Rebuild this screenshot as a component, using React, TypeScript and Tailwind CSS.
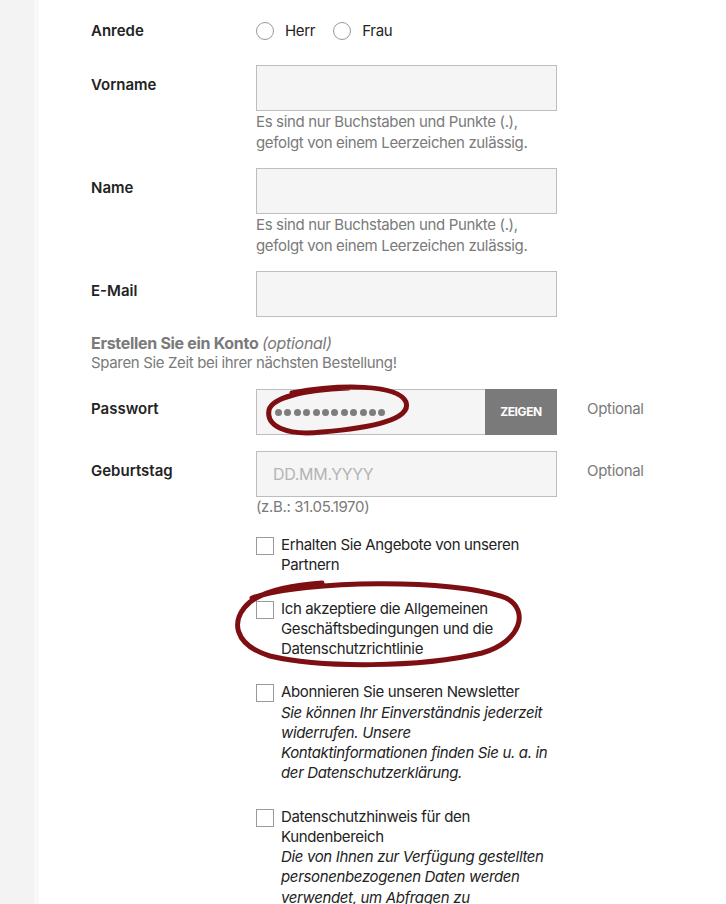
import React from "react";

const font = { fontFamily: "Inter, 'Liberation Sans', sans-serif" };

function Label({ text }: { text: string }) {
  return <div className="w-[165px] shrink-0 pt-[10px] text-[15px] leading-[20px] font-semibold text-[#232323]">{text}</div>;
}

function Radio({ label }: { label: string }) {
  return (
    <label className="flex items-center gap-[11px]">
      <span className="w-[18px] h-[18px] rounded-full border border-[#9a9a9a] bg-white" />
      <span className="text-[15px] tracking-[-0.3px] text-[#232323]">{label}</span>
    </label>
  );
}

function TextInput({ placeholder }: { placeholder?: string }) {
  return (
    <div className="w-[301px] h-[46px] border border-[#bdbdbd] bg-[#f5f5f5] flex items-center pl-[16px] text-[16px] tracking-[-0.3px] text-[#b3b3b3]">
      {placeholder}
    </div>
  );
}

const Help = ({ children }: { children: React.ReactNode }) => (
  <p className="text-[15px] leading-[21px] tracking-[-0.35px] text-[#7a7a7a]">{children}</p>
);

function Check({ children }: { children: React.ReactNode }) {
  return (
    <div className="flex gap-[7px] mt-[23px]">
      <span className="w-[18px] h-[18px] mt-[2px] shrink-0 border border-[#9a9a9a] bg-white" />
      <div className="text-[15px] leading-[20.25px] tracking-[-0.35px] text-[#232323] whitespace-nowrap">{children}</div>
    </div>
  );
}

export default function App() {
  return (
    <div className="flex h-screen overflow-hidden bg-white" style={font}>
      <div className="w-[39px] shrink-0 bg-[#f3f3f3] border-r-[5px] border-[#f8f8f8]" />
      <div className="relative flex-1 pl-[52px]">
        <div className="flex items-center h-[22px] mt-[20px]">
          <div className="w-[165px] text-[15px] font-semibold text-[#232323]">Anrede</div>
          <div className="flex gap-[18px]">
            <Radio label="Herr" />
            <Radio label="Frau" />
          </div>
        </div>

        <div className="flex mt-[23px]">
          <Label text="Vorname" />
          <div>
            <TextInput />
            <Help>
              Es sind nur Buchstaben und Punkte (.),
              <br />
              gefolgt von einem Leerzeichen zulässig.
            </Help>
          </div>
        </div>

        <div className="flex mt-[15px]">
          <Label text="Name" />
          <div>
            <TextInput />
            <Help>
              Es sind nur Buchstaben und Punkte (.),
              <br />
              gefolgt von einem Leerzeichen zulässig.
            </Help>
          </div>
        </div>

        <div className="flex mt-[15px]">
          <Label text="E-Mail" />
          <TextInput />
        </div>

        <div className="mt-[16px] text-[#7a7a7a] text-[15px] leading-[20px]">
          <div className="text-[16px] font-bold tracking-[-0.3px]">
            Erstellen Sie ein Konto <span className="italic font-normal">(optional)</span>
          </div>
          <div className="tracking-[-0.35px]">Sparen Sie Zeit bei ihrer nächsten Bestellung!</div>
        </div>

        <div className="flex mt-[16px]">
          <Label text="Passwort" />
          <div className="flex w-[301px] h-[46px] border border-[#bdbdbd] bg-[#f5f5f5]">
            <div className="flex-1 flex items-center gap-[2.4px] pl-[18px]">
              {Array.from({ length: 12 }).map((_, i) => (
                <span key={i} className="w-[7px] h-[7px] rounded-full bg-[#7d7d7d]" />
              ))}
            </div>
            <button className="w-[72px] -my-px -mr-px bg-[#7a7a7a] text-white text-[12px] font-bold tracking-[-0.4px]">ZEIGEN</button>
          </div>
          <div className="pl-[30px] pt-[9px] text-[15px] tracking-[-0.3px] text-[#7a7a7a]">Optional</div>
        </div>

        <div className="flex mt-[16px]">
          <Label text="Geburtstag" />
          <div>
            <TextInput placeholder="DD.MM.YYYY" />
            <div className="text-[15px] leading-[20px] tracking-[-0.35px] text-[#7a7a7a]">(z.B.: 31.05.1970)</div>
          </div>
          <div className="pl-[30px] pt-[9px] text-[15px] tracking-[-0.3px] text-[#7a7a7a]">Optional</div>
        </div>

        <div className="pl-[165px] -mt-[5px]">
          <Check>
            Erhalten Sie Angebote von unseren
            <br />
            Partnern
          </Check>
          <Check>
            Ich akzeptiere die Allgemeinen
            <br />
            Geschäftsbedingungen und die
            <br />
            Datenschutzrichtlinie
          </Check>
          <Check>
            Abonnieren Sie unseren Newsletter
            <br />
            <em>
              Sie können Ihr Einverständnis jederzeit
              <br />
              widerrufen. Unsere
              <br />
              Kontaktinformationen finden Sie u. a. in
              <br />
              der Datenschutzerklärung.
            </em>
          </Check>
          <Check>
            Datenschutzhinweis für den
            <br />
            Kundenbereich
            <br />
            <em>
              Die von Ihnen zur Verfügung gestellten
              <br />
              personenbezogenen Daten werden
              <br />
              verwendet, um Abfragen zu
            </em>
          </Check>
        </div>

        <svg className="absolute -left-[39px] top-0 pointer-events-none" width="726" height="904" fill="none">
          <path
            d="M292 393 C340 384 398 384 406 402 C412 419 372 428 322 432 C286 436 266 426 269 410 C272 398 302 390 348 388"
            stroke="#7d0f12"
            strokeWidth="5"
            strokeLinecap="round"
          />
          <path
            d="M252 598 C305 580 452 578 506 598 C530 610 521 642 482 653 C420 668 320 668 270 656 C234 645 229 620 250 602 C266 590 292 585 322 583"
            stroke="#7d0f12"
            strokeWidth="5"
            strokeLinecap="round"
          />
        </svg>
      </div>
    </div>
  );
}
